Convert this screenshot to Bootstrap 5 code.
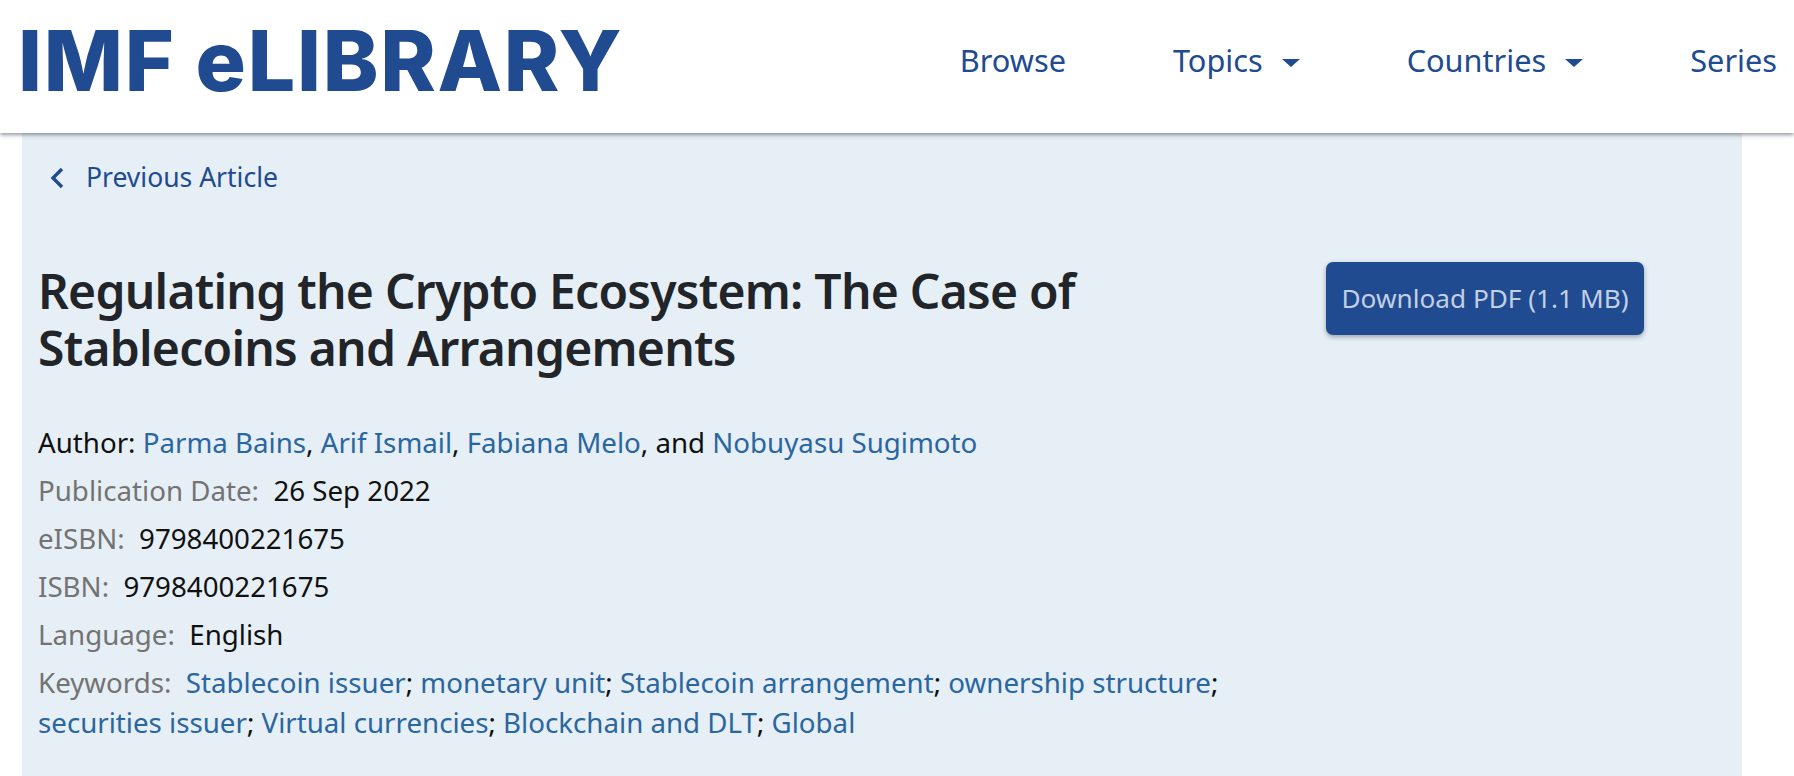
<!DOCTYPE html>
<html lang="en">
  <head>
    <meta charset="UTF-8" />
    <meta name="viewport" content="width=device-width, initial-scale=1.0" />
    <title>Regulating the Crypto Ecosystem</title>
    <link href="https://cdn.jsdelivr.net/npm/bootstrap@5.3.0/dist/css/bootstrap.min.css" rel="stylesheet" />
    <style>
      html, body { height: 100%; overflow: hidden; }
      body { font-family: "Noto Sans", "Open Sans", sans-serif; background: #fff; color: #111; }
      .site-head { height: 133px; background: #fff; box-shadow: 0 2px 4px rgba(60, 70, 80, .55); position: relative; z-index: 2; padding-left: 18px; padding-right: 17px; }
      .site-logo { font-family: Inter, "Liberation Sans", sans-serif; font-weight: 800; font-size: 84px; letter-spacing: 1.7px; line-height: 1; color: #204b91; text-decoration: none; margin-top: 19px; white-space: nowrap; }
      .head-links { gap: 107px; font-size: 30.7px; margin-bottom: 0; list-style: none; padding: 0 0 12px; white-space: nowrap; }
      .head-links a { color: #204b91; text-decoration: none; }
      .drop-tri { display: inline-block; width: 0; height: 0; border-left: 9px solid transparent; border-right: 9px solid transparent; border-top: 8px solid #204b91; margin-left: 19px; vertical-align: 5px; }
      .article-panel { width: 1720px; height: 643px; margin-left: 22px; background: #e6eff5; padding: 25px 16px 0; }
      .prev-link { color: #204b91; text-decoration: none; font-size: 26.5px; padding-left: 12px; gap: 21px; }
      .head-row { margin-top: 64px; }
      .art-title { font-size: 48px; letter-spacing: -.75px; font-weight: 600; line-height: 57px; color: #212529; margin: 0; width: 1100px; }
      .meta-wrap { width: 1200px; margin-top: 46px; }
      .meta-row { font-size: 27.7px; line-height: 40px; margin-bottom: 8px; }
      .meta-row a { color: #2a669f; text-decoration: none; }
      .meta-key { color: #737373; }
      .pdf-btn { background: #204b91; color: #c3cfe4; border: 0; border-radius: 7px; width: 318px; height: 73px; font-size: 26.2px; box-shadow: 0 2px 5px rgba(40, 50, 70, .4); padding: 0; margin-right: 82px; }
    </style>
  </head>
  <body>
    <header class="site-head d-flex justify-content-between">
      <a class="site-logo" href="#">IMF eLIBRARY</a>
      <ul class="head-links d-flex align-items-center">
        <li><a href="#">Browse</a></li>
        <li><a href="#">Topics<span class="drop-tri"></span></a></li>
        <li><a href="#">Countries<span class="drop-tri"></span></a></li>
        <li><a href="#">Series</a></li>
      </ul>
    </header>
    <main class="article-panel">
      <a class="prev-link d-flex align-items-center" href="#">
        <svg width="15" height="22" viewBox="0 0 15 22" fill="none" stroke="#204b91" stroke-width="3.4"><path d="M12 2 3 11l9 9" /></svg>
        <span>Previous Article</span>
      </a>
      <div class="d-flex justify-content-between head-row">
        <h1 class="art-title">Regulating the Crypto Ecosystem: The Case of Stablecoins and Arrangements</h1>
        <button class="pdf-btn" type="button">Download PDF (1.1 MB)</button>
      </div>
      <div class="meta-wrap">
        <div class="meta-row">Author: <a href="#">Parma Bains</a>, <a href="#">Arif Ismail</a>, <a href="#">Fabiana Melo</a>, and <a href="#">Nobuyasu Sugimoto</a></div>
        <div class="meta-row"><span class="meta-key">Publication Date:</span>&nbsp; 26 Sep 2022</div>
        <div class="meta-row"><span class="meta-key">eISBN:</span>&nbsp; 9798400221675</div>
        <div class="meta-row"><span class="meta-key">ISBN:</span>&nbsp; 9798400221675</div>
        <div class="meta-row"><span class="meta-key">Language:</span>&nbsp; English</div>
        <div class="meta-row"><span class="meta-key">Keywords:</span>&nbsp; <a href="#">Stablecoin issuer</a>; <a href="#">monetary unit</a>; <a href="#">Stablecoin arrangement</a>; <a href="#">ownership structure</a>; <a href="#">securities issuer</a>; <a href="#">Virtual currencies</a>; <a href="#">Blockchain and DLT</a>; <a href="#">Global</a></div>
      </div>
    </main>
    <script src="https://cdn.jsdelivr.net/npm/bootstrap@5.3.0/dist/js/bootstrap.bundle.min.js"></script>
  </body>
</html>
